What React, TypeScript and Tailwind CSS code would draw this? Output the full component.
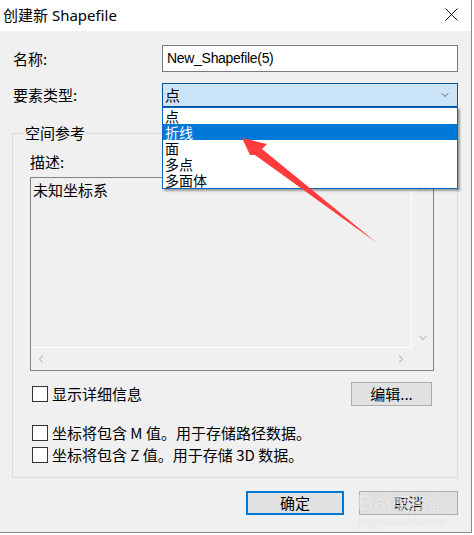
import { ChevronDown, ChevronUp, ChevronLeft, ChevronRight } from "lucide-react";

const cjk = "font-['Noto_Sans_CJK_SC','Noto_Sans',sans-serif]";
const latin = "font-['Liberation_Sans','Noto_Sans_CJK_SC',sans-serif]";

function Checkbox({ label }: { label: React.ReactNode }) {
  return (
    <div className="flex items-center gap-[4px] h-[22px]">
      <div className="ml-[2px] w-[16px] h-[16px] border border-[#333333] bg-white shrink-0" />
      <span className={`${cjk} text-[15px] leading-[20px] text-black whitespace-nowrap`}>{label}</span>
    </div>
  );
}

function Button({ label, primary }: { label: string; primary?: boolean }) {
  return (
    <button
      className={`bg-[#e1e1e1] flex items-center justify-center h-[24px] ${
        primary ? "border-2 border-[#0078d7]" : "border border-[#adadad]"
      } ${cjk} text-[15px] leading-[20px] text-black`}
    >
      {label}
    </button>
  );
}

const feature_types = ["点", "折线", "面", "多点", "多面体"];

export default function App() {
  return (
    <div className="relative w-[474px] h-[535px] bg-white overflow-hidden">
      <div className="w-[472px] h-[533px] flex flex-col bg-[#f0f0f0] border-r border-b border-[#8a8a8a]">
        {/* Title bar */}
        <div className="h-[31px] bg-white flex items-center justify-between pl-[3px] pr-[13px] shrink-0">
          <span className="font-['Noto_Sans','Noto_Sans_CJK_SC',sans-serif] text-[15px] leading-[20px] text-black -mt-[2px]">
            创建新 Shapefile
          </span>
          <svg width="13" height="13" viewBox="0 0 13 13" className="-mt-[2px]">
            <path d="M0.5 0.5 L12.5 12.5 M12.5 0.5 L0.5 12.5" stroke="#111" strokeWidth="1" />
          </svg>
        </div>

        {/* Body */}
        <div className="flex flex-col pl-[12px] pr-[13px]">
          <div className="flex items-center mt-[14px]">
            <span className={`${cjk} w-[150px] pl-[1px] text-[15px] leading-[20px] text-black`}>名称:</span>
            <div className="w-[296px] h-[27px] bg-white border border-[#7a7a7a] flex items-center pl-[4px]">
              <span className={`${latin} text-[14px] leading-[18px] tracking-[-0.3px] text-black -mt-[2px]`}>
                New_Shapefile(5)
              </span>
            </div>
          </div>

          <div className="flex items-center mt-[11px]">
            <span className={`${cjk} w-[150px] pl-[1px] text-[15px] leading-[20px] text-black`}>要素类型:</span>
            <div className="w-[296px] h-[24px] bg-[#cce4f7] border border-[#005499] flex items-center justify-between pl-[2px] pr-[6px]">
              <span className={`${cjk} text-[15px] leading-[20px] text-black`}>点</span>
              <ChevronDown className="size-[12px] text-[#333]" strokeWidth={1.5} />
            </div>
          </div>

          {/* Spatial reference group */}
          <div className="relative mt-[26px] w-[446px] h-[345px] border border-[#dcdcdc] pl-[17px] flex flex-col">
            <span className={`absolute -top-[11px] left-[11px] px-[1px] bg-[#f0f0f0] ${cjk} text-[15px] leading-[20px] text-black`}>
              空间参考
            </span>
            <span className={`${cjk} mt-[18px] text-[15px] leading-[20px] text-black`}>描述:</span>
            <div className="mt-[5px] w-[404px] h-[194px] border border-[#828282] grid grid-cols-[381px_21px] grid-rows-[170px_22px]">
              <div className="border-r border-b border-white pl-[2px]">
                <span className={`${cjk} text-[15px] leading-[20px] text-black`}>未知坐标系</span>
              </div>
              <div className="flex flex-col items-center justify-between pt-[4px] pb-[4px]">
                <ChevronUp className="size-[12px] text-[#c2c2c2]" strokeWidth={2.5} />
                <ChevronDown className="size-[12px] text-[#c2c2c2]" strokeWidth={2.5} />
              </div>
              <div className="flex items-center justify-between pl-[4px] pr-[5px]">
                <ChevronLeft className="size-[12px] text-[#c2c2c2]" strokeWidth={2.5} />
                <ChevronRight className="size-[12px] text-[#c2c2c2]" strokeWidth={2.5} />
              </div>
              <div />
            </div>

            <div className="flex items-center justify-between mt-[11px] w-[404px]">
              <Checkbox label="显示详细信息" />
              <div className="w-[81px] mr-[2px] flex flex-col">
                <Button label="编辑..." />
              </div>
            </div>

            <div className="flex flex-col mt-[16px]">
              <Checkbox label="坐标将包含 M 值。用于存储路径数据。" />
              <Checkbox label="坐标将包含 Z 值。用于存储 3D 数据。" />
            </div>
          </div>

          {/* Footer buttons */}
          <div className="flex justify-end gap-[15px] mt-[13px]">
            <div className="w-[98px] flex flex-col">
              <Button label="确定" primary />
            </div>
            <div className="w-[99px] flex flex-col">
              <Button label="取消" />
            </div>
          </div>
        </div>
      </div>

      {/* Open dropdown list */}
      <div className="absolute left-[162px] top-[107px] w-[296px] h-[82px] bg-white border border-[#0a64c0] shadow-[2px_2px_2px_rgba(0,0,0,0.35)] flex flex-col">
        {feature_types.map((t) => (
          <div
            key={t}
            className={`h-[16px] pl-[2px] flex items-center ${cjk} text-[14px] leading-[16px] ${
              t === "折线" ? "bg-[#0078d7] text-white" : "text-black"
            }`}
          >
            {t}
          </div>
        ))}
      </div>

      {/* Red annotation arrow */}
      <svg className="absolute inset-0 pointer-events-none" width="474" height="535" viewBox="0 0 474 535">
        <polygon
          points="242,138 267,144 262,149 377,243 255,155 250,155"
          fill="#ff3b3b"
        />
      </svg>

      {/* Watermark */}
      <div className="absolute left-[357px] top-[490px] pointer-events-none flex flex-col items-center">
        <span className="font-['Liberation_Sans',sans-serif] font-bold text-[22px] leading-[24px] text-white/60 [text-shadow:0_0_1px_rgba(0,0,0,0.15)]">
          Bai<span className={`${cjk} text-[18px]`}>度经验</span>
        </span>
        <span className="font-['Liberation_Serif',serif] text-[12px] leading-[12px] text-white/60 [text-shadow:0_0_1px_rgba(0,0,0,0.15)]">
          jingyan.baidu.com
        </span>
      </div>
    </div>
  );
}
